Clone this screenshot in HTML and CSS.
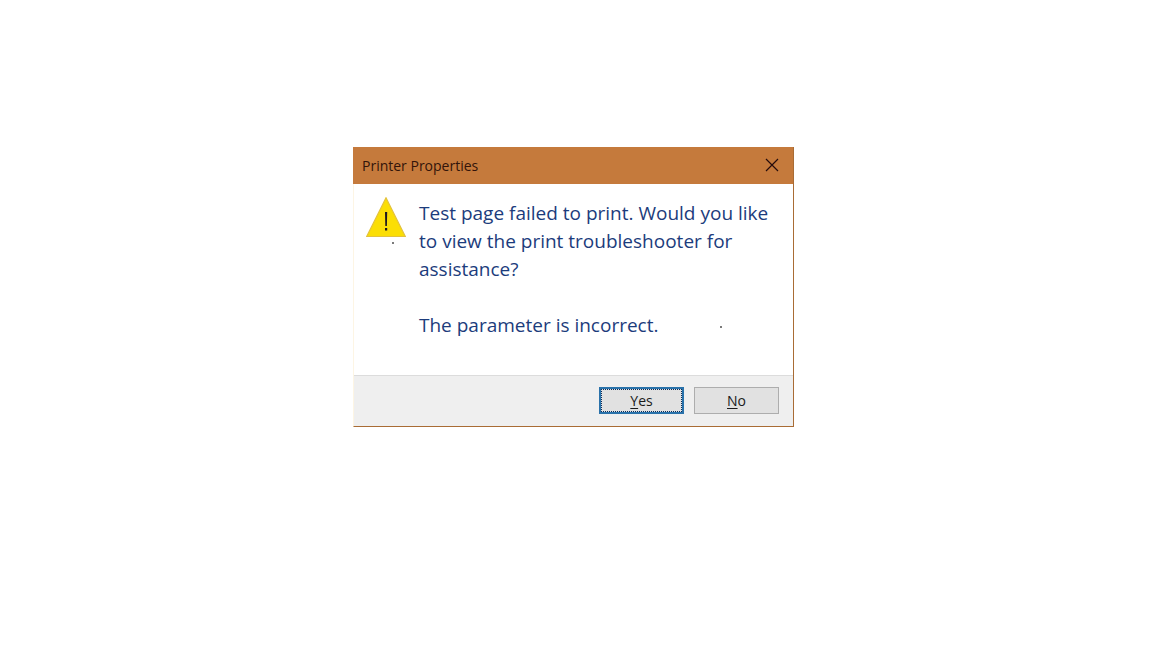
FILE: index.html
```html
<!DOCTYPE html>
<html lang="en">
<head>
<meta charset="utf-8">
<meta name="viewport" content="width=device-width, initial-scale=1">
<title>Printer Properties</title>
<link rel="stylesheet" href="styles.css">
</head>
<body class="page">
<section class="dialog" role="alertdialog" aria-labelledby="dialog-title" aria-describedby="dialog-message">
  <header class="titlebar">
    <h1 class="title" id="dialog-title">Printer Properties</h1>
    <button class="close" type="button" aria-label="Close">
      <svg width="14" height="14" viewBox="0 0 14 14" aria-hidden="true"><path d="M1 1L13 13M13 1L1 13" fill="none" stroke="#260c0c" stroke-width="1.2"/></svg>
    </button>
  </header>
  <div class="content">
    <svg class="warning" width="40" height="48" viewBox="0 0 40 48" aria-hidden="true">
      <path d="M20 .8L39.3 39.5H.7Z" fill="#fbde05" stroke="#e3c23c" stroke-width="1.2"/>
      <path d="M19 15h2.2l-.3 14h-1.6zM19 31h2.2v2.5H19z" fill="#1c1820"/>
      <path d="M26.2 45.2h1.6v1.6h-1.6z" fill="#222"/>
    </svg>
    <div class="message" id="dialog-message">
      <p class="text">Test page failed to print. Would you like<br>to view the print troubleshooter for<br>assistance?</p>
      <p class="text detail">The parameter is incorrect.<svg class="dot" width="2" height="2" viewBox="0 0 2 2" aria-hidden="true"><path d="M.2 .2h1.6v1.6H.2z" fill="#222"/></svg></p>
    </div>
  </div>
  <footer class="actions">
    <button class="button button-default" type="button"><span class="focus"><u>Y</u>es</span></button>
    <button class="button" type="button"><u>N</u>o</button>
  </footer>
</section>
</body>
</html>
```

FILE: styles.css
```css
* {
  box-sizing: border-box;
}

.page {
  display: flex;
  justify-content: center;
  align-items: flex-start;
  margin: 0;
  padding: 147px 5px 24px 0;
  background: #fff;
  font-family: "Open Sans", "Noto Sans", sans-serif;
}

.dialog {
  width: 100%;
  max-width: 441px;
  border: 1px solid #a96c35;
  border-left-color: #fdf5e4;
  border-top: 0;
  background: #fff;
}

.titlebar {
  display: flex;
  justify-content: space-between;
  align-items: center;
  height: 37px;
  margin-left: -1px;
  padding: 0 14px 0 9px;
  background: #c57a3c;
}

.title {
  margin: 0;
  color: #32140a;
  font-size: 14px;
  font-weight: 400;
  line-height: 20px;
}

.close {
  display: flex;
  padding: 0 0 2px;
  border: 0;
  background: transparent;
}

.content {
  display: flex;
  gap: 13px;
  padding: 13px 12px 36px;
}

.warning {
  flex: none;
}

.message {
  flex: 1;
  padding-top: 2px;
}

.text {
  margin: 0;
  color: #1c3c7c;
  font-size: 19px;
  line-height: 28px;
  white-space: nowrap;
}

.detail {
  display: flex;
  align-items: center;
  gap: 62px;
  margin-top: 28px;
}

.dot {
  margin-top: 4px;
}

.actions {
  display: flex;
  justify-content: flex-end;
  gap: 10px;
  padding: 11px 14px 12px;
  border-top: 1px solid #dcdcdc;
  background: #efefef;
}

.button {
  width: 85px;
  height: 27px;
  padding: 0;
  border: 1px solid #adadad;
  background: #e1e1e1;
  color: #1a1a1a;
  font-family: inherit;
  font-size: 14px;
  line-height: 20px;
}

.button u {
  text-underline-offset: 2px;
}

.button-default {
  border: 2px solid #2a72aa;
}

.focus {
  display: block;
  height: 100%;
  border: 1px dotted #0c2c58;
  line-height: 22px;
}
```
